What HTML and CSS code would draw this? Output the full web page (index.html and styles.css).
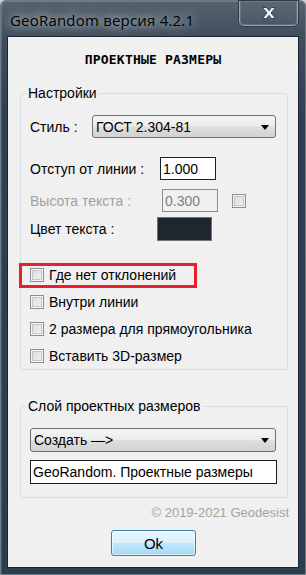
FILE: index.html
```html
<!DOCTYPE html>
<html lang="ru">
<head>
    <meta charset="UTF-8">
    <meta name="viewport" content="width=device-width, initial-scale=1.0">
    <title>GeoRandom</title>
    <link rel="stylesheet" href="styles.css">
</head>
<body>
    <div class="window">
        <div class="titlebar">
            <span class="title">GeoRandom версия 4.2.1</span>
            <button class="close" type="button">
                <svg width="16" height="14" viewBox="0 0 16 14">
                    <path d="M1.5 1.5h4l2.5 3.2 2.5-3.2h4l-4.5 5.5 4.5 5.5h-4l-2.5-3.2-2.5 3.2h-4l4.5-5.5z" fill="#f4f6f8" stroke="#3a4450" stroke-width="1" stroke-linejoin="round"/>
                </svg>
            </button>
        </div>

        <div class="client">
            <h1 class="heading">ПРОЕКТНЫЕ РАЗМЕРЫ</h1>

            <fieldset class="group group-settings">
                <legend>Настройки</legend>

                <div class="row row-style">
                    <span class="label label-style">Стиль :</span>
                    <div class="combo combo-style">
                        <span>ГОСТ 2.304-81</span>
                        <i class="arrow"></i>
                    </div>
                </div>

                <div class="row row-indent">
                    <span class="label label-indent">Отступ от линии :</span>
                    <div class="textbox num">1.000</div>
                </div>

                <div class="row row-height">
                    <span class="label label-height disabled">Высота текста :</span>
                    <div class="textbox num off">0.300</div>
                    <span class="checkbox check-height"></span>
                </div>

                <div class="row row-color">
                    <span class="label label-color">Цвет текста :</span>
                    <div class="swatch"></div>
                </div>

                <div class="checks">
                    <label class="check-row">
                        <span class="checkbox"></span>
                        <span>Где нет отклонений</span>
                        <span class="highlight"></span>
                    </label>
                    <label class="check-row">
                        <span class="checkbox"></span>
                        <span>Внутри линии</span>
                    </label>
                    <label class="check-row">
                        <span class="checkbox"></span>
                        <span>2 размера для прямоугольника</span>
                    </label>
                    <label class="check-row">
                        <span class="checkbox"></span>
                        <span>Вставить 3D-размер</span>
                    </label>
                </div>
            </fieldset>

            <fieldset class="group group-layer">
                <legend>Слой проектных размеров</legend>
                <div class="combo combo-layer">
                    <span>Создать —&gt;</span>
                    <i class="arrow"></i>
                </div>
                <div class="textbox layer-name">GeoRandom. Проектные размеры</div>
            </fieldset>

            <div class="copyright">© 2019-2021 Geodesist</div>

            <div class="actions">
                <button class="btn-ok" type="button">Ok</button>
            </div>
        </div>
    </div>
</body>
</html>
```

FILE: styles.css
```css
*{
    padding: 0;
    margin: 0;
    box-sizing: border-box;
}
html, body{
    background-color: #c9cdd1;
}
body{
    font-family: "Liberation Sans", Arial, sans-serif;
    font-size: 14px;
    color: #000;
}

/* window frame */
.window{
    width: 306px;
    height: 575px;
    padding: 0 6px 6px 6px;
    border: 1px solid #6d7a86;
    border-radius: 6px 6px 0 0;
    background: linear-gradient(180deg, #56636f 0px, #3f4e5d 36px, #2e3f52 120px, #2c3d50 100%);
    box-shadow: inset 1px 1px 0 rgba(255, 255, 255, 0.15);
}
.titlebar{
    height: 35px;
    display: flex;
    justify-content: space-between;
    align-items: flex-start;
}
.title{
    font-family: "Open Sans", "Noto Sans", sans-serif;
    font-size: 15px;
    letter-spacing: 0.2px;
    color: #000;
    margin: 9px 0 0 3px;
    line-height: 20px;
    text-shadow: 0 0 8px rgba(225, 230, 235, 0.9), 0 0 14px rgba(225, 230, 235, 0.7);
}
.close{
    width: 59px;
    height: 25px;
    margin-right: 1px;
    border: 1px solid #9aa5b0;
    border-top: none;
    border-radius: 0 0 5px 5px;
    background: linear-gradient(180deg, #5b6874, #4a5865);
    box-shadow: 0 0 0 1px #2d3a47, inset 0 0 0 1px rgba(255, 255, 255, 0.12);
    display: flex;
    align-items: center;
    justify-content: center;
}
.close svg{
    display: block;
    margin-top: -1px;
}

/* client area */
.client{
    height: 532px;
    background-color: #f0f0f0;
    border: 1px solid #1b2632;
}
.heading{
    margin-top: 14px;
    line-height: 17px;
    text-align: center;
    font-family: "DejaVu Sans Mono", monospace;
    font-size: 13px;
    font-weight: bold;
    letter-spacing: 0.2px;
}

.group{
    margin-left: 12px;
    width: 268px;
    border: 1px solid #d5dfe5;
    border-radius: 3px;
    padding: 14px 10px 0 9px;
}
.group legend{
    margin-left: -4px;
    padding: 0 2px;
    line-height: 16px;
}
.group-settings{
    margin-top: 17px;
}
.group-layer{
    margin-top: 28px;
    padding-bottom: 13px;
}

.row{
    display: flex;
    align-items: center;
    height: 23px;
}
.row-indent{
    margin-top: 19px;
}
.row-height{
    margin-top: 9px;
}
.row-color{
    margin-top: 5px;
    height: 24px;
}
.label{
    flex: none;
}
.label-style{ width: 62px; }
.label-indent{ width: 130px; }
.label-height{ width: 132px; }
.label-color{ width: 127px; }
.disabled{
    color: #a0a0a0;
}

.combo{
    position: relative;
    height: 23px;
    border: 1px solid #707070;
    border-radius: 3px;
    background: linear-gradient(180deg, #f4f4f4 0%, #ececec 48%, #dedede 52%, #d2d2d2 100%);
    display: flex;
    align-items: center;
    padding-left: 3px;
}
.combo-style{
    width: 184px;
}
.combo-layer{
    width: 246px;
    height: 24px;
    padding-left: 3px;
}
.arrow{
    position: absolute;
    right: 6px;
    top: 9px;
    width: 0;
    height: 0;
    border-left: 4.5px solid transparent;
    border-right: 4.5px solid transparent;
    border-top: 5px solid #000;
}

.textbox{
    height: 23px;
    background-color: #fff;
    border: 1px solid #1e1e1e;
    padding: 2px 2px 0 2px;
    line-height: 18px;
}
.num{
    width: 56px;
}
.off{
    background-color: #f0f0f0;
    border-color: #8c8c8c;
    color: #7f7f7f;
}
.layer-name{
    width: 247px;
    height: 24px;
    margin-top: 8px;
    padding-left: 2px;
}

.swatch{
    width: 55px;
    height: 24px;
    background-color: #1f262e;
    border: 1px solid #6f747a;
}

.checkbox{
    display: inline-block;
    flex: none;
    width: 14px;
    height: 14px;
    border: 1px solid #8e8f8f;
    background: linear-gradient(135deg, #d8d8d8, #f6f6f6);
    box-shadow: inset 0 0 0 1px #f4f4f4, inset 0 0 0 2px #c6c6c6;
}
.check-height{
    margin-left: 14px;
}

.checks{
    margin-top: 20px;
}
.check-row{
    position: relative;
    display: flex;
    align-items: center;
    height: 27px;
}
.check-row .checkbox{
    margin-right: 5px;
}
.highlight{
    position: absolute;
    left: -11px;
    top: 2px;
    width: 178px;
    height: 25px;
    border: 3px solid #e8202a;
}

.copyright{
    margin-top: 7px;
    padding-right: 9px;
    text-align: right;
    font-size: 13px;
    line-height: 16px;
    color: #a3a3a3;
}

.actions{
    display: flex;
    justify-content: center;
    margin-top: 9px;
}
.btn-ok{
    width: 85px;
    height: 26px;
    border: 1px solid #3c7fb1;
    border-radius: 3px;
    background: linear-gradient(180deg, #e9f6fd 0%, #d9f0fc 48%, #bee6fd 52%, #a7d9f5 100%);
    box-shadow: inset 0 0 0 1px rgba(255, 255, 255, 0.6);
    font-family: "Liberation Sans", Arial, sans-serif;
    font-size: 15px;
    color: #000;
    padding-left: 1px;
}
```
